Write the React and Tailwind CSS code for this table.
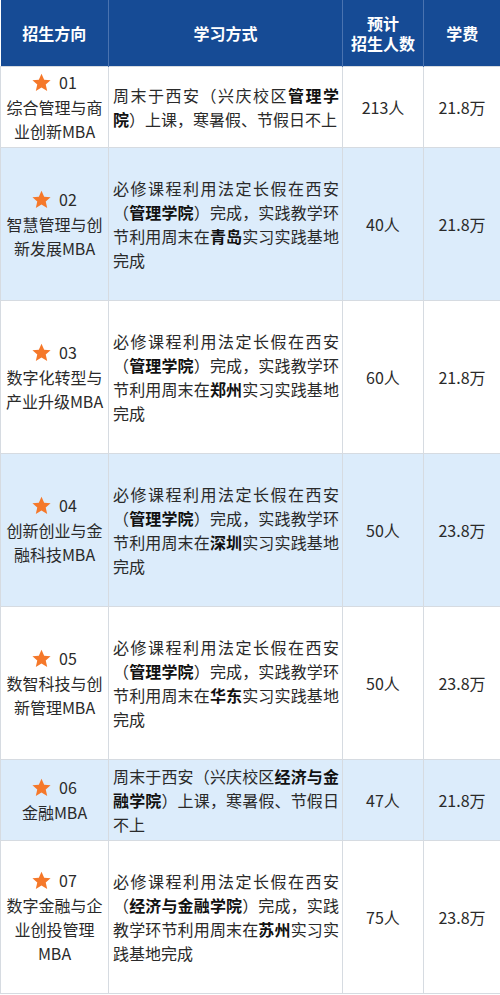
import React from "react";

const rows = [
  {
    no: "01",
    name: "综合管理与商业创新MBA",
    mode: ["周末于西安（兴庆校区", { b: "管理学院" }, "）上课，寒暑假、节假日不上"],
    count: "213人",
    fee: "21.8万",
    h: "h-[81px]",
  },
  {
    no: "02",
    name: "智慧管理与创新发展MBA",
    mode: ["必修课程利用法定长假在西安（", { b: "管理学院" }, "）完成，实践教学环节利用周末在", { b: "青岛" }, "实习实践基地完成"],
    count: "40人",
    fee: "21.8万",
    h: "h-[153px]",
    alt: true,
  },
  {
    no: "03",
    name: "数字化转型与产业升级MBA",
    mode: ["必修课程利用法定长假在西安（", { b: "管理学院" }, "）完成，实践教学环节利用周末在", { b: "郑州" }, "实习实践基地完成"],
    count: "60人",
    fee: "21.8万",
    h: "h-[153px]",
  },
  {
    no: "04",
    name: "创新创业与金融科技MBA",
    mode: ["必修课程利用法定长假在西安（", { b: "管理学院" }, "）完成，实践教学环节利用周末在", { b: "深圳" }, "实习实践基地完成"],
    count: "50人",
    fee: "23.8万",
    h: "h-[153px]",
    alt: true,
  },
  {
    no: "05",
    name: "数智科技与创新管理MBA",
    mode: ["必修课程利用法定长假在西安（", { b: "管理学院" }, "）完成，实践教学环节利用周末在", { b: "华东" }, "实习实践基地完成"],
    count: "50人",
    fee: "23.8万",
    h: "h-[153px]",
  },
  {
    no: "06",
    name: "金融MBA",
    mode: ["周末于西安（兴庆校区", { b: "经济与金融学院" }, "）上课，寒暑假、节假日不上"],
    count: "47人",
    fee: "21.8万",
    h: "h-[81px]",
    alt: true,
  },
  {
    no: "07",
    name: "数字金融与企业创投管理MBA",
    mode: ["必修课程利用法定长假在西安（", { b: "经济与金融学院" }, "）完成，实践教学环节利用周末在", { b: "苏州" }, "实习实践基地完成"],
    count: "75人",
    fee: "23.8万",
    h: "h-[153px]",
  },
];

function Star() {
  return (
    <svg width="19" height="19" viewBox="1 1 22 22" className="inline-block">
      <path
        d="M12 1.8l3.1 6.9 7.4.7-5.6 5 1.7 7.4L12 17.9l-6.6 3.9 1.7-7.4-5.6-5 7.4-.7z"
        fill="#f5782a"
      />
    </svg>
  );
}

export default function App() {
  return (
    <div
      className="w-[500px] bg-white text-[#2a2a2a] text-[16px] leading-[24px]"
      style={{ fontFamily: '"Noto Sans CJK SC", "Noto Sans", sans-serif' }}
    >
      <table className="w-[500px] table-fixed border-collapse">
        <colgroup>
          <col className="w-[108px]" />
          <col className="w-[234px]" />
          <col className="w-[81px]" />
          <col className="w-[77px]" />
        </colgroup>
        <thead>
          <tr className="h-[66px] bg-[#164b95] text-white font-bold">
            <th className="border-r border-[#4a73b0] text-center">招生方向</th>
            <th className="border-r border-[#4a73b0] text-center">学习方式</th>
            <th className="border-r border-[#4a73b0] text-center leading-[20px]">
              预计
              <br />
              招生人数
            </th>
            <th className="text-center">学费</th>
          </tr>
        </thead>
        <tbody>
          {rows.map((r) => (
            <tr key={r.no} className={`${r.h} ${r.alt ? "bg-[#dcecfb]" : "bg-white"}`}>
              <td className="border border-[#d6dbe1] px-0 text-center align-middle">
                <div className="flex items-center justify-center gap-[8px] leading-[25px]">
                  <Star />
                  <span>{r.no}</span>
                </div>
                <div className="px-[4px]">{r.name}</div>
              </td>
              <td className="border border-[#d6dbe1] pl-[4px] pr-[3px] text-justify align-middle">
                {r.mode.map((m, i) =>
                  typeof m === "string" ? (
                    <span key={i}>{m}</span>
                  ) : (
                    <span key={i} className="font-bold text-[#111]">
                      {m.b}
                    </span>
                  )
                )}
              </td>
              <td className="border border-[#d6dbe1] text-center align-middle">{r.count}</td>
              <td className="border border-[#d6dbe1] text-center align-middle">{r.fee}</td>
            </tr>
          ))}
        </tbody>
      </table>
    </div>
  );
}
